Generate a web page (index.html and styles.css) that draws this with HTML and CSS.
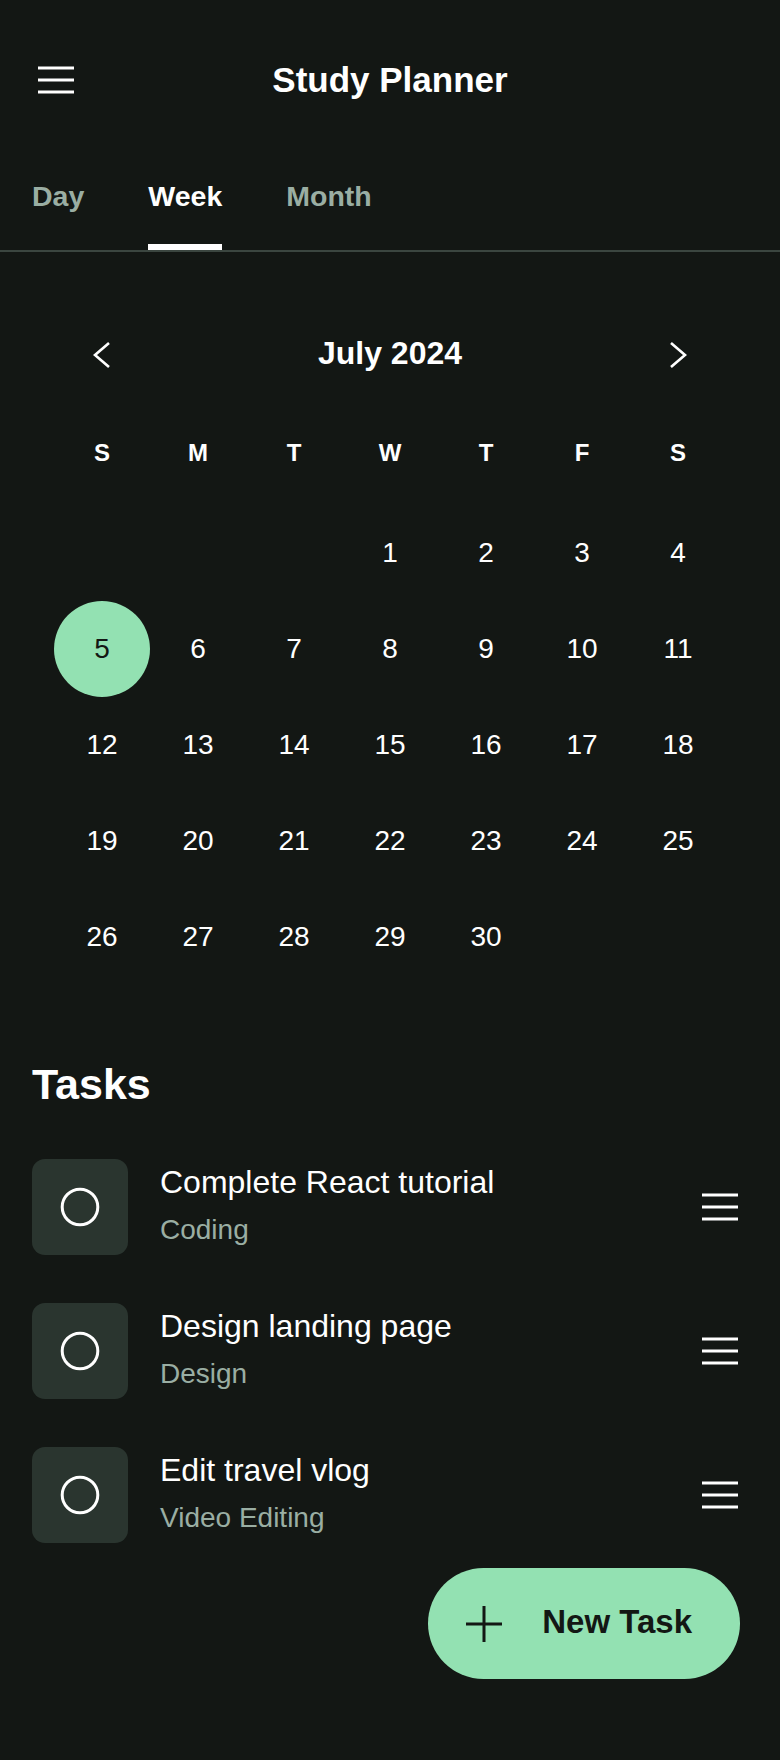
FILE: index.html
```html
<!DOCTYPE html>
<html lang="en">
<head>
<meta charset="utf-8">
<title>Study Planner</title>
<link rel="stylesheet" href="styles.css">
</head>
<body>
<div class="app">
  <header class="topbar">
    <button class="icon-btn" aria-label="Menu">
      <svg width="36" height="28" viewBox="0 0 36 28"><path d="M0 2H36M0 14H36M0 26H36" stroke="#fff" stroke-width="3" fill="none"/></svg>
    </button>
    <h1 class="title">Study Planner</h1>
    <span class="spacer"></span>
  </header>

  <nav class="tabs">
    <a class="tab">Day</a>
    <a class="tab active">Week</a>
    <a class="tab">Month</a>
  </nav>

  <section class="calendar">
    <div class="month-nav">
      <button class="nav-btn" aria-label="Previous month">
        <svg width="48" height="48" viewBox="0 0 48 48"><polyline points="31,14 17,26 31,38" fill="none" stroke="#fff" stroke-width="2.6"/></svg>
      </button>
      <h2 class="month">July 2024</h2>
      <button class="nav-btn" aria-label="Next month">
        <svg width="48" height="48" viewBox="0 0 48 48"><polyline points="17,14 31,26 17,38" fill="none" stroke="#fff" stroke-width="2.6"/></svg>
      </button>
    </div>
    <div class="dow">
      <span>S</span><span>M</span><span>T</span><span>W</span><span>T</span><span>F</span><span>S</span>
    </div>
    <div class="days">
      <span></span><span></span><span></span>
      <span class="day">1</span><span class="day">2</span><span class="day">3</span><span class="day">4</span>
      <span class="day selected">5</span><span class="day">6</span><span class="day">7</span><span class="day">8</span><span class="day">9</span><span class="day">10</span><span class="day">11</span>
      <span class="day">12</span><span class="day">13</span><span class="day">14</span><span class="day">15</span><span class="day">16</span><span class="day">17</span><span class="day">18</span>
      <span class="day">19</span><span class="day">20</span><span class="day">21</span><span class="day">22</span><span class="day">23</span><span class="day">24</span><span class="day">25</span>
      <span class="day">26</span><span class="day">27</span><span class="day">28</span><span class="day">29</span><span class="day">30</span>
    </div>
  </section>

  <section class="tasks">
    <h2 class="tasks-title">Tasks</h2>
    <ul class="task-list">
      <li class="task">
        <span class="check"><svg width="48" height="48" viewBox="0 0 48 48"><circle cx="24" cy="24" r="17.8" fill="none" stroke="#fff" stroke-width="3"/></svg></span>
        <div class="task-text">
          <span class="task-name">Complete React tutorial</span>
          <span class="task-cat">Coding</span>
        </div>
        <span class="handle"><svg width="36" height="28" viewBox="0 0 36 28"><path d="M0 2H36M0 14H36M0 26H36" stroke="#fff" stroke-width="3" fill="none"/></svg></span>
      </li>
      <li class="task">
        <span class="check"><svg width="48" height="48" viewBox="0 0 48 48"><circle cx="24" cy="24" r="17.8" fill="none" stroke="#fff" stroke-width="3"/></svg></span>
        <div class="task-text">
          <span class="task-name">Design landing page</span>
          <span class="task-cat">Design</span>
        </div>
        <span class="handle"><svg width="36" height="28" viewBox="0 0 36 28"><path d="M0 2H36M0 14H36M0 26H36" stroke="#fff" stroke-width="3" fill="none"/></svg></span>
      </li>
      <li class="task">
        <span class="check"><svg width="48" height="48" viewBox="0 0 48 48"><circle cx="24" cy="24" r="17.8" fill="none" stroke="#fff" stroke-width="3"/></svg></span>
        <div class="task-text">
          <span class="task-name">Edit travel vlog</span>
          <span class="task-cat">Video Editing</span>
        </div>
        <span class="handle"><svg width="36" height="28" viewBox="0 0 36 28"><path d="M0 2H36M0 14H36M0 26H36" stroke="#fff" stroke-width="3" fill="none"/></svg></span>
      </li>
    </ul>
  </section>

  <button class="fab">
    <svg width="36" height="36" viewBox="0 0 36 36"><path d="M18 0V36M0 18H36" stroke="#131714" stroke-width="3" fill="none"/></svg>
    <span>New Task</span>
  </button>
</div>
</body>
</html>
```

FILE: styles.css
```css
* { box-sizing: border-box; }
html, body {
  margin: 0;
  padding: 0;
  background: #131714;
}
body {
  font-family: "Liberation Sans", Arial, sans-serif;
  color: #ffffff;
  min-height: 1760px;
}
button {
  font-family: inherit;
  background: none;
  border: 0;
  padding: 0;
  color: inherit;
  cursor: pointer;
}
.app {
  min-height: 1760px;
}

/* header */
.topbar {
  height: 160px;
  padding: 0 32px;
  display: grid;
  grid-template-columns: 48px 1fr 48px;
  align-items: center;
}
.icon-btn {
  width: 48px;
  height: 48px;
  display: flex;
  align-items: center;
  justify-content: center;
}
.icon-btn svg, .handle svg, .check svg, .nav-btn svg, .fab svg { display: block; }
.title {
  margin: 0;
  text-align: center;
  font-size: 35px;
  font-weight: 700;
  line-height: 48px;
}

/* tabs */
.tabs {
  display: flex;
  gap: 64px;
  padding: 0 32px;
  border-bottom: 2px solid #3b4640;
}
.tab {
  display: block;
  padding-top: 20px;
  padding-bottom: 32px;
  line-height: 32px;
  font-size: 28.5px;
  font-weight: 700;
  color: #9aaea3;
  border-bottom: 6px solid transparent;
}
.tab.active {
  color: #ffffff;
  border-bottom-color: #ffffff;
}

/* calendar */
.calendar {
  padding: 77px 54px 0;
}
.month-nav {
  display: grid;
  grid-template-columns: 96px 1fr 96px;
  align-items: center;
  height: 48px;
}
.nav-btn {
  width: 48px;
  height: 48px;
  justify-self: center;
}
.month {
  margin: 0;
  text-align: center;
  font-size: 32px;
  font-weight: 700;
  line-height: 48px;
}
.dow {
  margin-top: 52px;
  display: grid;
  grid-template-columns: repeat(7, 96px);
  height: 48px;
  align-items: center;
  text-align: center;
  font-size: 24px;
  font-weight: 700;
}
.days {
  margin-top: 28px;
  display: grid;
  grid-template-columns: repeat(7, 96px);
  grid-auto-rows: 96px;
}
.day {
  display: flex;
  align-items: center;
  justify-content: center;
  font-size: 28px;
  border-radius: 50%;
}
.day.selected {
  background: #93e1b2;
  color: #131714;
}

/* tasks */
.tasks {
  padding: 75px 32px 0;
}
.tasks-title {
  margin: 0;
  font-size: 43px;
  font-weight: 700;
  line-height: 48px;
}
.task-list {
  list-style: none;
  margin: 51px 0 0;
  padding: 0;
  display: flex;
  flex-direction: column;
  gap: 48px;
}
.task {
  display: flex;
  align-items: center;
  height: 96px;
}
.check {
  width: 96px;
  height: 96px;
  flex: none;
  border-radius: 13px;
  background: #2a352f;
  display: flex;
  align-items: center;
  justify-content: center;
}
.task-text {
  flex: 1;
  margin-left: 32px;
  display: flex;
  flex-direction: column;
  gap: 11px;
  margin-top: -5px;
}
.task-name {
  font-size: 32px;
  line-height: 40px;
  color: #ffffff;
}
.task-cat {
  font-size: 28px;
  line-height: 34px;
  color: #9aaea3;
}
.handle {
  flex: none;
  margin-right: 10px;
}

/* floating button */
.fab {
  position: fixed;
  right: 40px;
  bottom: 81px;
  height: 111px;
  border-radius: 56px;
  background: #93e1b2;
  color: #131714;
  display: flex;
  align-items: center;
  gap: 40px;
  padding: 0 48px 0 38px;
  font-size: 33px;
  font-weight: 700;
}
.fab span { line-height: 40px; margin-top: -3px; }
```
